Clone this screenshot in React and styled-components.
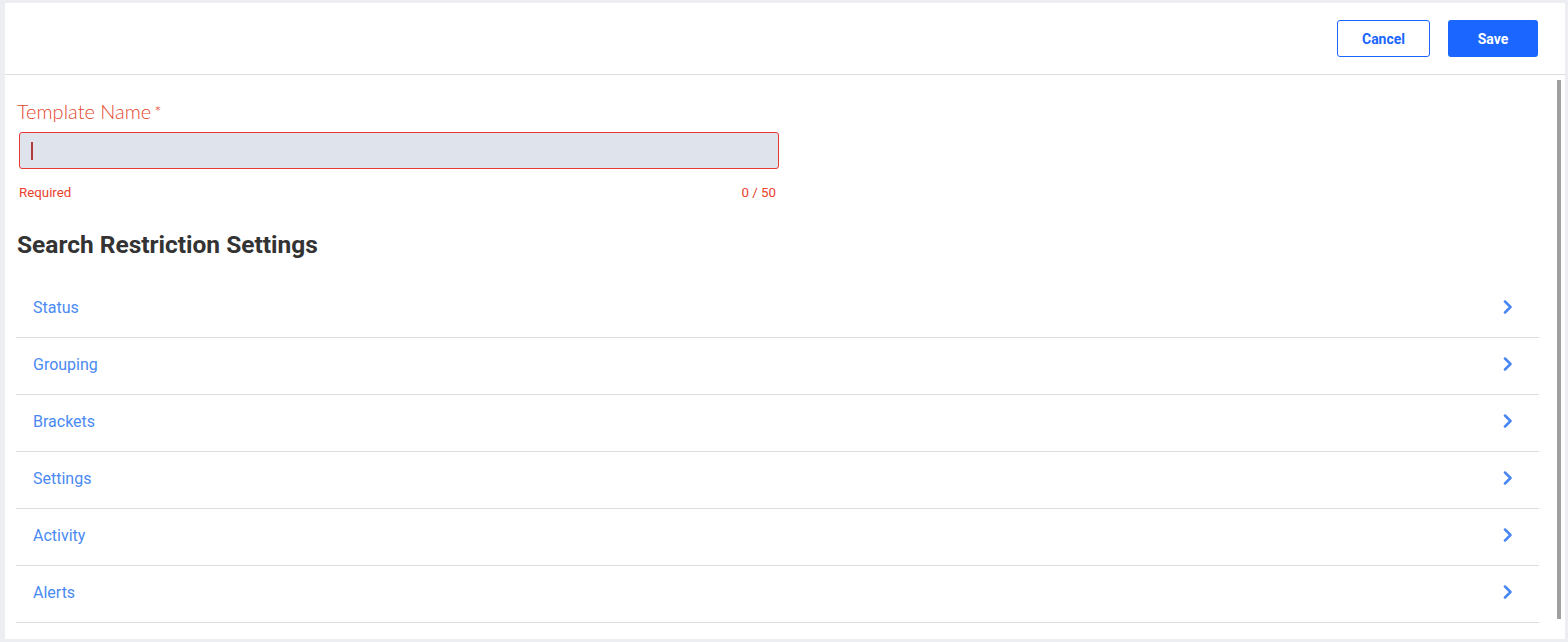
import React from 'react'
import styled, { createGlobalStyle } from 'styled-components'

const sections = ['Status', 'Grouping', 'Brackets', 'Settings', 'Activity', 'Alerts']

const GlobalStyle = createGlobalStyle`
    html, body {
        margin: 0;
        padding: 0;
        background: #eceef2;
        font-family: Roboto, "Liberation Sans", sans-serif;
    }
    * {
        box-sizing: border-box;
    }
`

const Chevron = () => (
    <svg width="10" height="14" viewBox="0 0 10 14" fill="none">
        <path d="M2 1.5 L7.5 7 L2 12.5" stroke="#4a87f2" strokeWidth="2.5" strokeLinecap="round" strokeLinejoin="round" />
    </svg>
)

const App = () => {
    return (
        <>
            <GlobalStyle />
            <Page>
                <Panel>
                    <Header>
                        <OutlineButton>Cancel</OutlineButton>
                        <PrimaryButton>Save</PrimaryButton>
                    </Header>
                    <Body>
                        <Field>
                            <Label>Template Name<Star>*</Star></Label>
                            <InputBox>
                                <Caret />
                            </InputBox>
                            <Helper>
                                <span>Required</span>
                                <span>0 / 50</span>
                            </Helper>
                        </Field>
                        <Heading>Search Restriction Settings</Heading>
                        <List>
                            {sections.map((name) => (
                                <Row key={name}>
                                    <RowText>{name}</RowText>
                                    <Chevron />
                                </Row>
                            ))}
                        </List>
                    </Body>
                    <ScrollThumb />
                </Panel>
            </Page>
        </>
    )
}

export default App

const Page = styled.div`
    height: 642px;
    padding: 3px 3px 3px 5px;
`

const Panel = styled.div`
    position: relative;
    background: #fff;
    height: 636px;
    width: 1560px;
    display: flex;
    flex-direction: column;
`

const Header = styled.div`
    height: 72px;
    flex-shrink: 0;
    border-bottom: 1px solid #dcdde0;
    display: flex;
    justify-content: flex-end;
    align-items: flex-start;
    gap: 18px;
    padding: 17px 27px 0 0;
`

const ButtonBase = styled.button`
    height: 37px;
    border-radius: 3px;
    font-family: Roboto, "Liberation Sans", sans-serif;
    font-weight: 700;
    font-size: 14px;
    cursor: pointer;
`

const OutlineButton = styled(ButtonBase)`
    width: 93px;
    background: #fff;
    color: #1a66ff;
    border: 1px solid #1a66ff;
`

const PrimaryButton = styled(ButtonBase)`
    width: 90px;
    background: #1a66ff;
    color: #fff;
    border: none;
`

const Body = styled.div`
    flex: 1;
    overflow: hidden;
    padding: 25px 26px 0 11px;
`

const ScrollThumb = styled.div`
    position: absolute;
    top: 77px;
    right: 4px;
    width: 4px;
    height: 539px;
    background: #a0a0a0;
`

const Field = styled.div`
    width: 771px;
    display: flex;
    flex-direction: column;
`

const Label = styled.label`
    font-family: Lato, "Open Sans", sans-serif;
    font-weight: 300;
    font-size: 20px;
    line-height: 22px;
    color: #e4472d;
    padding-left: 1px;
`

const Star = styled.span`
    font-size: 17px;
    margin-left: 3px;
`

const InputBox = styled.div`
    margin: 8px 0 0 3px;
    height: 37px;
    width: 760px;
    background: #dfe3eb;
    border: 1px solid #e53935;
    border-radius: 3px;
    display: flex;
    align-items: center;
    padding-left: 11px;
`

const Caret = styled.div`
    width: 2px;
    height: 18px;
    background: #b23b3b;
`

const Helper = styled.div`
    display: flex;
    justify-content: space-between;
    width: 757px;
    margin: 16px 0 0 3px;
    font-size: 13.3px;
    line-height: 16px;
    color: #e8412c;
`

const Heading = styled.h2`
    margin: 29px 0 0 1px;
    font-size: 24.5px;
    line-height: 30px;
    font-weight: 700;
    color: #333;
`

const List = styled.div`
    margin-top: 21px;
    display: flex;
    flex-direction: column;
`

const Row = styled.div`
    height: 57px;
    border-bottom: 1px solid #dcdde0;
    display: flex;
    align-items: center;
    justify-content: space-between;
    padding: 0 26px 4px 17px;
`

const RowText = styled.span`
    font-size: 16px;
    color: #4a8af2;
`
